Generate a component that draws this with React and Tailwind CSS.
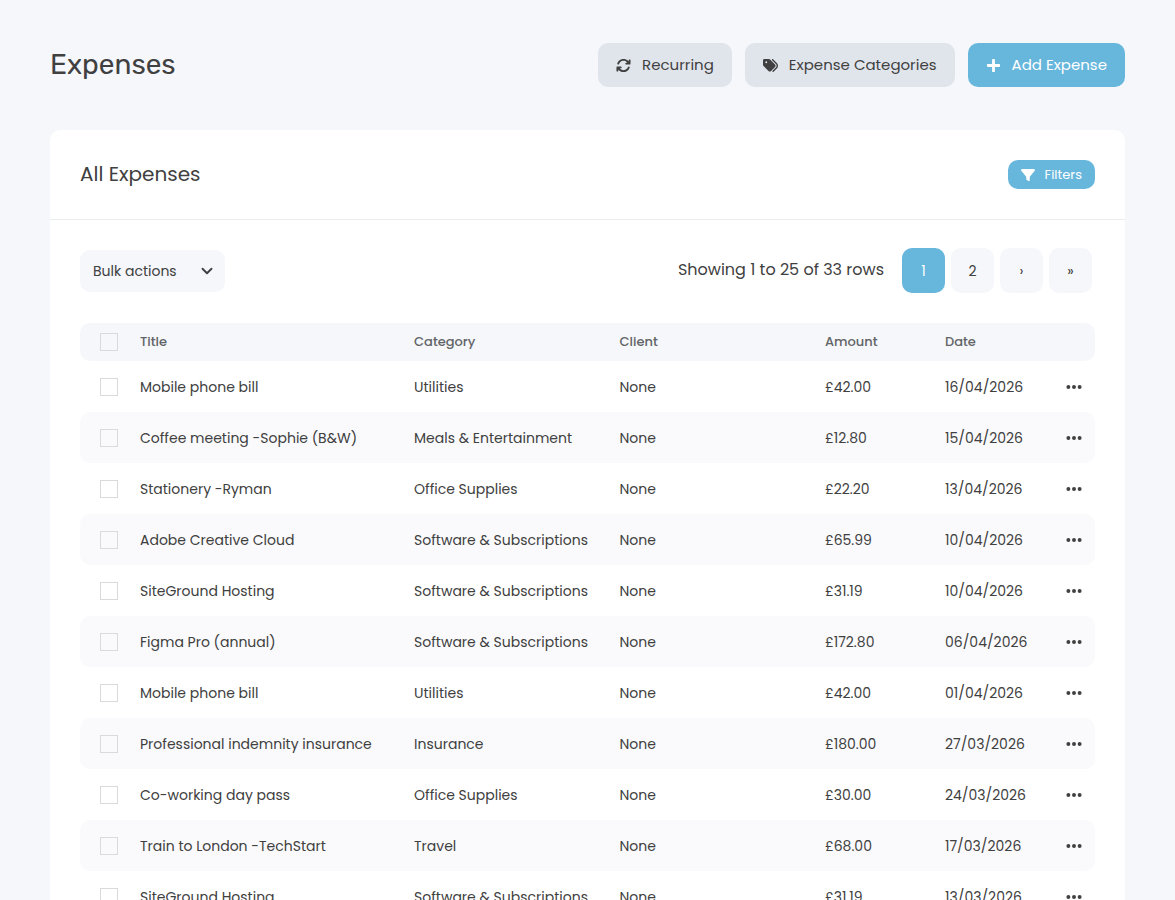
import React, { useState } from 'react';
import { FaArrowsRotate, FaTags, FaFilter, FaEllipsis } from 'react-icons/fa6';
import { FaPlus } from 'react-icons/fa';

const EXPENSES = [
    { id: 1, title: 'Mobile phone bill', category: 'Utilities', client: 'None', amount: '£42.00', date: '16/04/2026' },
    { id: 2, title: 'Coffee meeting -Sophie (B&W)', category: 'Meals & Entertainment', client: 'None', amount: '£12.80', date: '15/04/2026' },
    { id: 3, title: 'Stationery -Ryman', category: 'Office Supplies', client: 'None', amount: '£22.20', date: '13/04/2026' },
    { id: 4, title: 'Adobe Creative Cloud', category: 'Software & Subscriptions', client: 'None', amount: '£65.99', date: '10/04/2026' },
    { id: 5, title: 'SiteGround Hosting', category: 'Software & Subscriptions', client: 'None', amount: '£31.19', date: '10/04/2026' },
    { id: 6, title: 'Figma Pro (annual)', category: 'Software & Subscriptions', client: 'None', amount: '£172.80', date: '06/04/2026' },
    { id: 7, title: 'Mobile phone bill', category: 'Utilities', client: 'None', amount: '£42.00', date: '01/04/2026' },
    { id: 8, title: 'Professional indemnity insurance', category: 'Insurance', client: 'None', amount: '£180.00', date: '27/03/2026' },
    { id: 9, title: 'Co-working day pass', category: 'Office Supplies', client: 'None', amount: '£30.00', date: '24/03/2026' },
    { id: 10, title: 'Train to London -TechStart', category: 'Travel', client: 'None', amount: '£68.00', date: '17/03/2026' },
    { id: 11, title: 'SiteGround Hosting', category: 'Software & Subscriptions', client: 'None', amount: '£31.19', date: '13/03/2026' },
];

const PAGES = ['1', '2', '›', '»'];

const Checkbox = ({ label, checked, onChange }) => (
    <input
        type="checkbox"
        aria-label={label}
        checked={checked}
        onChange={onChange}
        className="block size-[18px] appearance-none border border-[#d9dadc] checked:border-[#67b6dc] checked:bg-[#67b6dc]"
    />
);

const HeaderButton = ({ icon: Icon, primary, children }) => (
    <button
        type="button"
        className={`flex h-11 items-center gap-[11px] rounded-[10px] px-[18px] text-[15px] ${primary ? 'bg-[#67b6dc] text-white' : 'bg-[#e0e5ec]'}`}
    >
        <Icon className="h-[15px] w-auto" />
        <span>{children}</span>
    </button>
);

const ExpenseRow = ({ expense, checked, onToggle }) => (
    <tr className="h-[51px] even:bg-[#fafafc]">
        <td className="rounded-l-[10px] pl-5">
            <Checkbox label={`Select ${expense.title}`} checked={checked} onChange={onToggle} />
        </td>
        <td>{expense.title}</td>
        <td>{expense.category}</td>
        <td>{expense.client}</td>
        <td>{expense.amount}</td>
        <td>{expense.date}</td>
        <td className="rounded-r-[10px]">
            <button type="button" aria-label="Row actions" className="block">
                <FaEllipsis className="h-[18px] w-auto" />
            </button>
        </td>
    </tr>
);

export default function App() {
    const [selected, setSelected] = useState([]);
    const [page, setPage] = useState('1');

    const toggle = (id) => {
        setSelected(selected.includes(id) ? selected.filter((s) => s !== id) : [...selected, id]);
    };

    const toggleAll = () => {
        setSelected(selected.length === EXPENSES.length ? [] : EXPENSES.map((e) => e.id));
    };

    return (
        <div className="min-h-screen bg-[#f5f7fb] px-[50px] pt-[43px] font-['Poppins','Inter',sans-serif] text-[#404040]">
            <header className="flex items-center justify-between">
                <h1 className="font-['Rubik','Roboto',sans-serif] text-[28px] leading-10">Expenses</h1>
                <div className="flex gap-[13px]">
                    <HeaderButton icon={FaArrowsRotate}>Recurring</HeaderButton>
                    <HeaderButton icon={FaTags}>Expense Categories</HeaderButton>
                    <HeaderButton icon={FaPlus} primary>Add Expense</HeaderButton>
                </div>
            </header>

            <main className="mt-[43px] rounded-t-[10px] bg-white">
                <div className="flex h-[90px] items-center justify-between border-b border-[#ebecee] px-[30px]">
                    <h2 className="pb-px text-xl">All Expenses</h2>
                    <button type="button" className="flex h-[29px] items-center gap-[10px] rounded-[10px] bg-[#67b6dc] px-[13px] text-[13px] text-white">
                        <FaFilter size={14} />
                        <span>Filters</span>
                    </button>
                </div>

                <div className="px-[30px] pt-7">
                    <div className="flex items-center justify-between">
                        <div className="relative">
                            <select aria-label="Bulk actions" className="h-[42px] w-[145px] appearance-none rounded-[10px] bg-[#f5f7fb] px-[13px] text-sm">
                                <option>Bulk actions</option>
                            </select>
                            <svg viewBox="0 0 16 16" className="pointer-events-none absolute top-[15px] right-3 size-3" fill="none" stroke="currentColor" strokeWidth="2.5" strokeLinecap="round" strokeLinejoin="round">
                                <path d="M2 5l6 6 6-6" />
                            </svg>
                        </div>
                        <div className="flex items-center pr-[3px]">
                            <p className="pr-[18px] pb-0.5 text-base">Showing 1 to 25 of 33 rows</p>
                            <nav aria-label="Pagination" className="flex gap-[6px]">
                                {PAGES.map((p) => (
                                    <button
                                        key={p}
                                        type="button"
                                        onClick={() => setPage(p)}
                                        className={`h-[45px] w-[43px] rounded-[10px] text-sm ${p === page ? 'bg-[#67b6dc] text-white' : 'bg-[#f5f7fb]'}`}
                                    >
                                        {p}
                                    </button>
                                ))}
                            </nav>
                        </div>
                    </div>

                    <table className="mt-[30px] w-full table-fixed text-left text-sm">
                        <colgroup>
                            <col className="w-[60px]" />
                            <col className="w-[27%]" />
                            <col />
                            <col />
                            <col className="w-[120px]" />
                            <col className="w-[120px]" />
                            <col className="w-[30px]" />
                        </colgroup>
                        <thead>
                            <tr className="h-[38px] bg-[#f5f7fb] text-[13px] text-[#626466] [&>th]:font-medium">
                                <th className="rounded-l-[10px] pl-5">
                                    <Checkbox label="Select all" checked={selected.length === EXPENSES.length} onChange={toggleAll} />
                                </th>
                                <th>Title</th>
                                <th>Category</th>
                                <th>Client</th>
                                <th>Amount</th>
                                <th>Date</th>
                                <th className="rounded-r-[10px]" />
                            </tr>
                        </thead>
                        <tbody>
                            {EXPENSES.map((expense) => (
                                <ExpenseRow
                                    key={expense.id}
                                    expense={expense}
                                    checked={selected.includes(expense.id)}
                                    onToggle={() => toggle(expense.id)}
                                />
                            ))}
                        </tbody>
                    </table>
                </div>
            </main>
        </div>
    );
}
